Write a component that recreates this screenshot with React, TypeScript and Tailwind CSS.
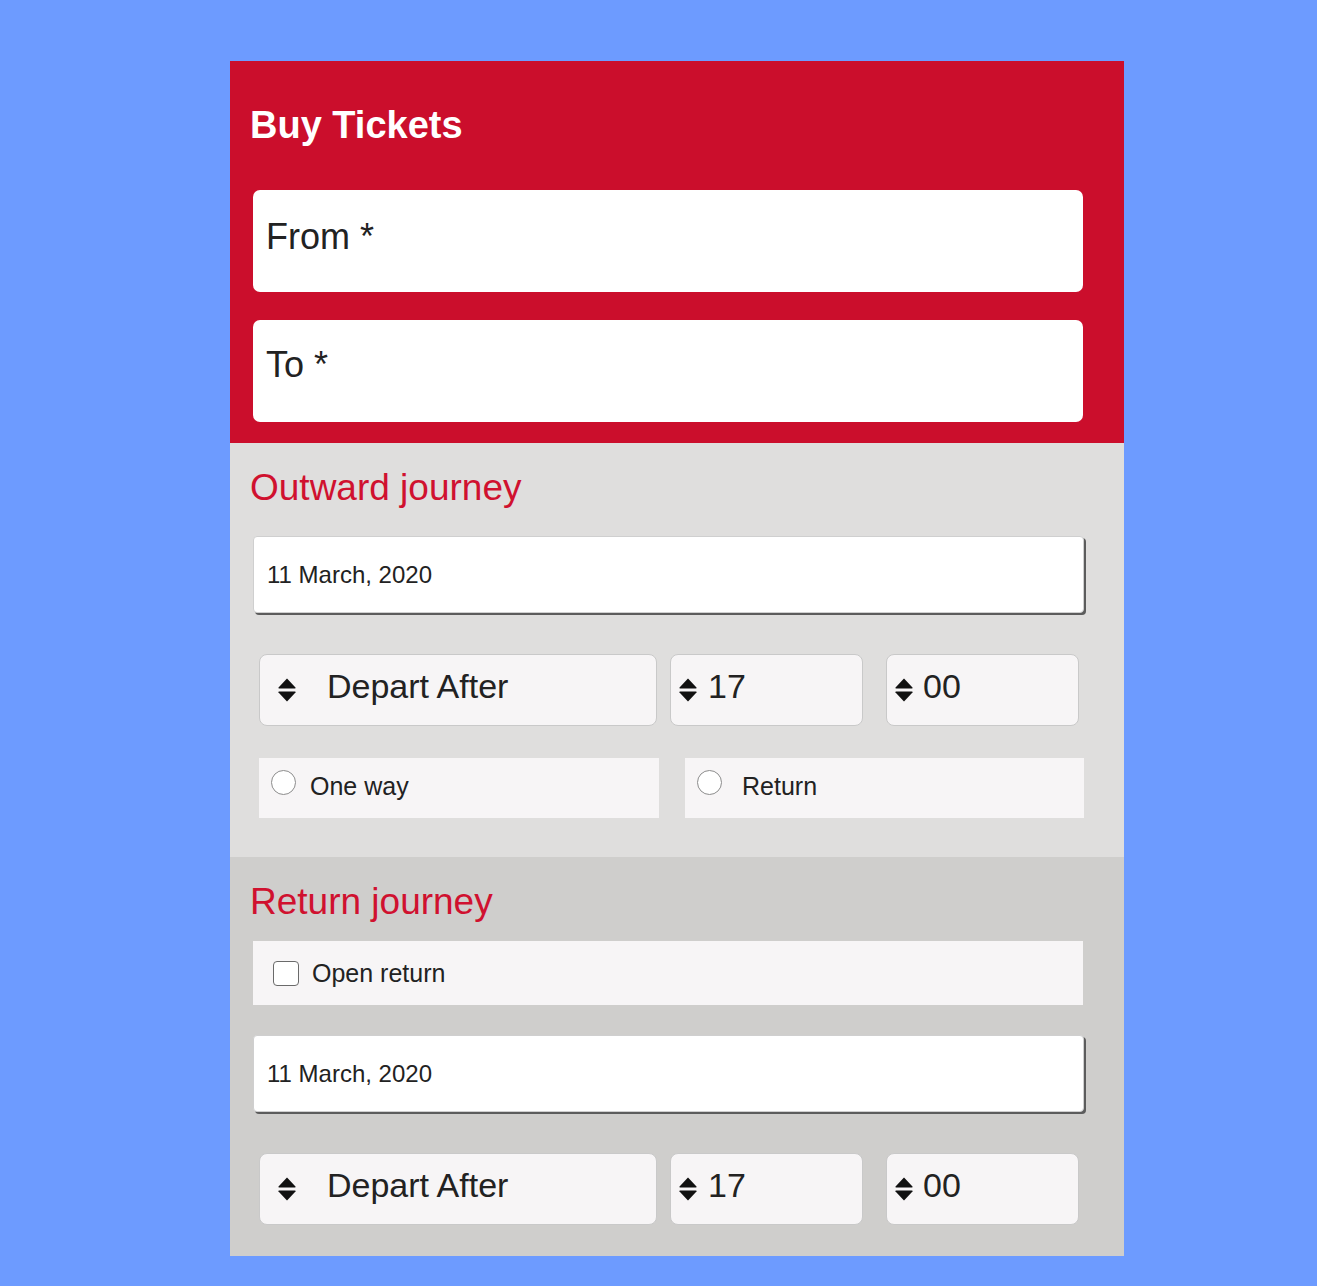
import React from "react";

const font = { fontFamily: '"Liberation Sans", Arial, Helvetica, sans-serif' };

function Arrows() {
  return (
    <svg width="18" height="24" viewBox="0 0 18 24" className="shrink-0">
      <path d="M9 0.5 L17.5 9.5 Q18 10.5 16.8 10.5 L1.2 10.5 Q0 10.5 0.5 9.5 Z" fill="#111" />
      <path d="M9 23.5 L17.5 14.5 Q18 13.5 16.8 13.5 L1.2 13.5 Q0 13.5 0.5 14.5 Z" fill="#111" />
    </svg>
  );
}

function DateField() {
  return (
    <div className="ml-[23px] w-[831px] h-[77px] bg-white rounded-[4px] border border-[#cfcfcf] shadow-[2px_2px_0_#5c5c5c] flex items-center pl-[13px] text-[24px] text-[#222] leading-[30px]">
      11 March, 2020
    </div>
  );
}

function SelectRow({ className }: { className?: string }) {
  const box = "h-[72px] bg-[#f7f5f6] rounded-[8px] border border-[#c9c9c9] flex items-center text-[34px] leading-[40px] text-[#222]";
  return (
    <div className={"ml-[29px] flex " + (className ?? "")}>
      <div className={box + " w-[398px] pl-[18px]"}>
        <Arrows />
        <span className="ml-[31px] mb-[9px]">Depart After</span>
      </div>
      <div className={box + " w-[193px] ml-[13px] pl-[8px]"}>
        <Arrows />
        <span className="ml-[11px] mb-[9px]">17</span>
      </div>
      <div className={box + " w-[193px] ml-[23px] pl-[8px]"}>
        <Arrows />
        <span className="ml-[10px] mb-[9px]">00</span>
      </div>
    </div>
  );
}

function Radio() {
  return <div className="w-[25px] h-[25px] rounded-full border border-[#8c8c8c] bg-white shrink-0" />;
}

export default function App() {
  return (
    <div className="min-h-[1286px] bg-[#6d9bff] pt-[61px] pl-[230px]" style={font}>
      <div className="w-[894px]">
        <div className="bg-[#cb0e2c] pt-[42px] pb-[21px]">
          <h1 className="px-[20px] text-[38px] font-bold leading-[44px] text-white">Buy Tickets</h1>
          <div className="mt-[43px] ml-[23px] w-[830px] h-[102px] bg-white rounded-[7px] pl-[13px] pt-[26px] text-[36px] leading-[41px] text-[#222]">
            From *
          </div>
          <div className="mt-[28px] ml-[23px] w-[830px] h-[102px] bg-white rounded-[7px] pl-[13px] pt-[24px] text-[36px] leading-[41px] text-[#222]">
            To *
          </div>
        </div>

        <div className="bg-[#dfdedd] pt-[25px] pb-[39px]">
          <h2 className="pl-[20px] text-[37px] leading-[40px] text-[#d0112f]">Outward journey</h2>
          <div className="mt-[28px]">
            <DateField />
          </div>
          <SelectRow className="mt-[41px]" />
          <div className="mt-[32px] ml-[29px] flex">
            <div className="w-[400px] h-[60px] bg-[#f7f5f6] flex items-start pt-[12px] pl-[12px]">
              <Radio />
              <span className="ml-[14px] mt-[1px] text-[25px] leading-[30px] text-[#222]">One way</span>
            </div>
            <div className="ml-[26px] w-[399px] h-[60px] bg-[#f7f5f6] flex items-start pt-[12px] pl-[12px]">
              <Radio />
              <span className="ml-[20px] mt-[1px] text-[25px] leading-[30px] text-[#222]">Return</span>
            </div>
          </div>
        </div>

        <div className="bg-[#cfcecc] pt-[25px] pb-[31px]">
          <h2 className="pl-[20px] text-[37px] leading-[40px] text-[#d0112f]">Return journey</h2>
          <div className="mt-[19px] ml-[23px] w-[830px] h-[64px] bg-[#f7f5f6] flex items-center pl-[20px]">
            <div className="w-[26px] h-[25px] rounded-[4px] border-[1.5px] border-[#6a6a6a] bg-white shrink-0" />
            <span className="ml-[13px] text-[25px] leading-[30px] text-[#222]">Open return</span>
          </div>
          <div className="mt-[30px]">
            <DateField />
          </div>
          <SelectRow className="mt-[41px]" />
        </div>
      </div>
    </div>
  );
}
